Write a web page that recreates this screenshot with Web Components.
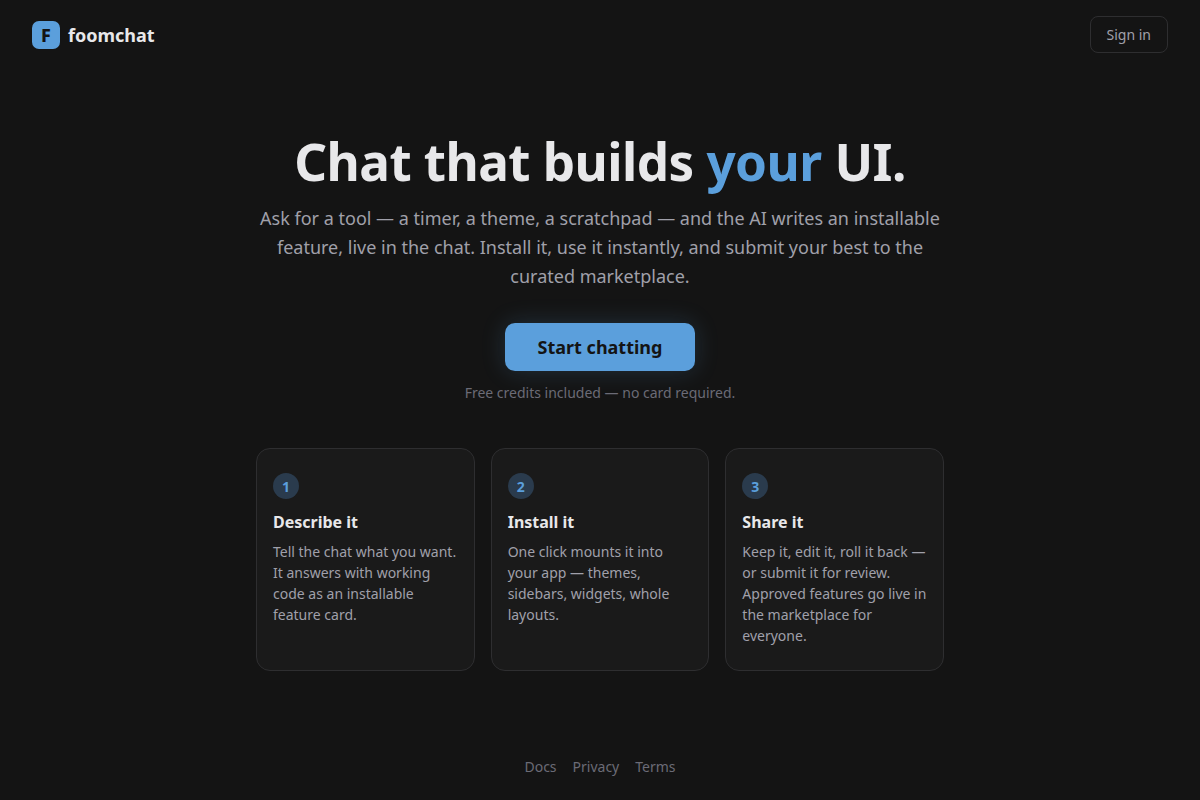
<!DOCTYPE html>
<html lang="en"><head><meta charset="utf-8"><title>foomchat</title>
<style>
html,body{margin:0;height:100%;background:#141414}
body{font-family:"Noto Sans",sans-serif;color:#e8e8ea}
</style></head><body>
<foom-page>
<foom-header></foom-header>
<foom-hero></foom-hero>
<foom-steps>
<foom-step n="1" title="Describe it">Tell the chat what you want. It answers with working code as an installable feature card.</foom-step>
<foom-step n="2" title="Install it">One click mounts it into your app — themes, sidebars, widgets, whole layouts.</foom-step>
<foom-step n="3" title="Share it">Keep it, edit it, roll it back — or submit it for review. Approved features go live in the marketplace for everyone.</foom-step>
</foom-steps>
<foom-footer></foom-footer>
</foom-page>
<script>
function def(name,html,init){customElements.define(name,class extends HTMLElement{
  connectedCallback(){if(this.shadowRoot)return;const s=this.attachShadow({mode:'open'});s.innerHTML=html;if(init)init(this,s);}
});}
def('foom-page',`<style>:host{display:flex;flex-direction:column;align-items:center;height:800px;box-sizing:border-box}</style><slot></slot>`);
def('foom-header',`<style>
:host{display:flex;align-self:stretch;justify-content:space-between;align-items:center;padding:16px 32px;height:37px}
.brand{display:flex;align-items:center;gap:8px;font-size:18px;font-weight:700;color:#e8e8ea}
.logo{width:28px;height:28px;border-radius:7px;background:#5b9fdc;color:#141414;display:grid;place-items:center;font-size:18px;font-weight:800}
.btn{box-sizing:border-box;height:37px;padding:0 16px;display:flex;align-items:center;border:1px solid #2e2e30;border-radius:8px;color:#a0a0aa;font-size:14px}
</style><div class="brand"><span class="logo">F</span>foomchat</div><div class="btn">Sign in</div>`);
def('foom-hero',`<style>
:host{display:flex;flex-direction:column;align-items:center;text-align:center;padding-top:61px}
h1{margin:0;font-size:51.2px;letter-spacing:-.55px;line-height:62px;font-weight:700;color:#e8e8ea}
h1 span{color:#5b9fdc}
p{margin:12px 0 0;width:700px;font-size:18px;line-height:29px;color:#a0a0aa}
.cta{margin-top:32px;box-sizing:border-box;width:190px;height:48px;border-radius:10px;background:#5b9fdc;color:#141414;font-size:18px;font-weight:700;display:flex;align-items:center;justify-content:center;box-shadow:0 0 24px rgba(91,159,220,.2)}
small{margin-top:12px;font-size:14px;line-height:20px;color:#6b6b76}
</style><h1>Chat that builds <span>your</span> UI.</h1>
<p>Ask for a tool — a timer, a theme, a scratchpad — and the AI writes an installable feature, live in the chat. Install it, use it instantly, and submit your best to the curated marketplace.</p>
<div class="cta">Start chatting</div><small>Free credits included — no card required.</small>`);
def('foom-steps',`<style>:host{display:grid;grid-template-columns:repeat(3,1fr);gap:16px;width:688px;margin-top:45px}</style><slot></slot>`);
def('foom-step',`<style>
:host{display:block;box-sizing:border-box;height:223px;padding:24px 16px 16px;background:#1a1a1a;border:1px solid #2e2e30;border-radius:14px}
.n{width:26px;height:26px;border-radius:50%;background:#2a3b4d;color:#5b9fdc;display:grid;place-items:center;font-size:14px;font-weight:700}
h3{margin:12px 0 8px;font-size:16px;line-height:22px;font-weight:700;color:#e8e8ea}
.t{font-size:14px;line-height:21px;color:#a0a0aa}
</style><div class="n"></div><h3></h3><div class="t"><slot></slot></div>`,(el,s)=>{s.querySelector('.n').textContent=el.getAttribute('n');s.querySelector('h3').textContent=el.getAttribute('title');});
def('foom-footer',`<style>
:host{display:flex;gap:16px;margin-top:auto;padding-bottom:23px;font-size:14px;line-height:20px;color:#6b6b76}
</style><span>Docs</span><span>Privacy</span><span>Terms</span>`);
</script></body></html>
